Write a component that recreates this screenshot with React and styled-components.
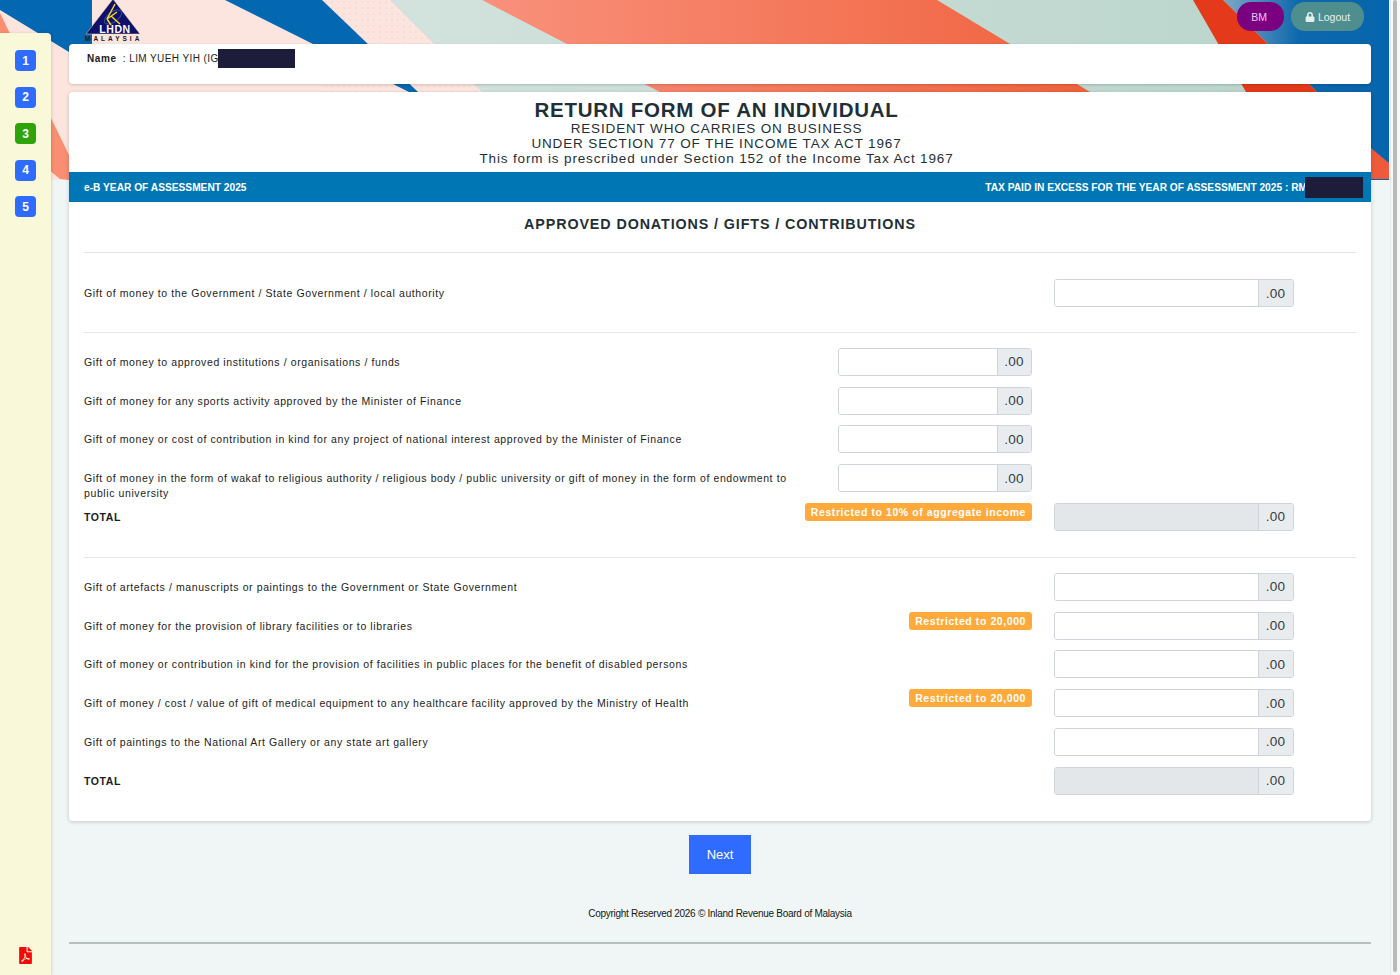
import React from "react";
import styled, { createGlobalStyle } from "styled-components";
import { FaLock, FaFilePdf } from "react-icons/fa";

const GlobalStyle = createGlobalStyle`
    html, body {
        margin: 0;
        padding: 0;
        background: #eff6f5;
        font-family: "Liberation Sans", Arial, sans-serif;
    }
`

const Page = styled.div`
    position: relative;
    display: flex;
    height: 975px;
    overflow: hidden;
    background: #eff6f5;
`

const BannerArt = styled.svg`
    position: absolute;
    top: 0;
    left: 0;
`

const Sidebar = styled.aside`
    position: relative;
    width: 51px;
    margin-top: 33px;
    padding: 17px 0 11px;
    box-sizing: border-box;
    display: flex;
    flex-direction: column;
    align-items: center;
    gap: 15.5px;
    background: #f9f9d9;
    border-top-right-radius: 4px;
    box-shadow: 1px 0 3px rgba(0, 0, 0, 0.12);
`

const StepBadge = styled.div`
    width: 21px;
    height: 21px;
    display: flex;
    align-items: center;
    justify-content: center;
    border-radius: 4px;
    background: ${({ $done }) => ($done ? "#2ea40a" : "#2f6bff")};
    color: #fff;
    font-size: 12px;
    font-weight: 700;
`

const PdfLink = styled.a`
    margin-top: auto;
    color: #f50a0a;
    font-size: 17px;
    line-height: 0;
`

const Main = styled.main`
    position: relative;
    flex: 1;
    min-width: 0;
    padding: 0 19px 0 18px;
`

const TopBar = styled.div`
    height: 44px;
    display: flex;
    justify-content: space-between;
    padding: 0 7px 0 15px;
`

const Actions = styled.div`
    display: flex;
    gap: 7px;
    padding-top: 2px;
`

const PillButton = styled.button`
    height: 29px;
    width: ${({ $w }) => $w}px;
    padding: 0 ${({ $shift }) => $shift}px 0 0;
    border: none;
    border-radius: 14px;
    display: flex;
    align-items: center;
    justify-content: center;
    gap: 3px;
    background: ${({ $bg }) => $bg};
    color: ${({ $fg }) => $fg};
    font-family: inherit;
    font-size: 10.5px;
`

const NameCard = styled.div`
    height: 40px;
    margin-bottom: 8px;
    padding: 8px 18px;
    box-sizing: border-box;
    position: relative;
    background: #fff;
    border-radius: 4px;
    box-shadow: 0 1px 3px rgba(0, 0, 0, 0.18);
    color: #1c1c1c;
    font-size: 10px;
    line-height: 13px;
    letter-spacing: 0.4px;
`

const NameLabel = styled.b`
    margin-right: 3px;
    letter-spacing: 0.6px;
`

const Redaction = styled.span`
    position: absolute;
    top: ${({ $top }) => $top}px;
    left: ${({ $left }) => $left}px;
    width: ${({ $w }) => $w}px;
    height: ${({ $h }) => $h}px;
    background: #1d1c3a;
`

const Card = styled.section`
    background: #fff;
    border-radius: 4px;
    box-shadow: 0 1px 4px rgba(0, 0, 0, 0.18);
`

const FormHeader = styled.header`
    height: 80px;
    padding: 7px 7px 0 0;
    box-sizing: border-box;
    text-align: center;
    color: #1f2f38;
`

const Title = styled.h1`
    margin: 0;
    font-size: 20.5px;
    line-height: 22px;
    font-weight: 700;
    letter-spacing: 0.75px;
`

const SubTitle = styled.div`
    font-size: 13.5px;
    line-height: 15px;
    letter-spacing: 0.85px;
`

const InfoBar = styled.div`
    position: relative;
    height: 30px;
    padding: 0 64px 0 15px;
    display: flex;
    align-items: center;
    justify-content: space-between;
    background: #0077b5;
    color: #fff;
    font-size: 10.2px;
    font-weight: 700;
`

const FormBody = styled.div`
    padding: 0 15px 15px;
`

const SectionTitle = styled.h2`
    margin: 0;
    height: 51px;
    padding-top: 13px;
    box-sizing: border-box;
    text-align: center;
    border-bottom: 1px solid #e3e6e6;
    color: #1f2f38;
    font-size: 14.3px;
    line-height: 18px;
    font-weight: 700;
    letter-spacing: 0.9px;
`

const Group = styled.div`
    padding: ${({ $top }) => $top}px 0 ${({ $bottom }) => $bottom}px;
    border-bottom: ${({ $last }) => ($last ? "none" : "1.5px solid #e6e8e8")};
`

const Row = styled.div`
    height: 38.8px;
    display: grid;
    grid-template-columns: 712px 42px 194px 22px 240px;
    align-items: start;
`

const Label = styled.div`
    grid-column: 1;
    padding-top: 7px;
    color: #1c1c1c;
    font-size: 10.5px;
    line-height: 15px;
    letter-spacing: 0.6px;
    font-weight: ${({ $bold }) => ($bold ? 700 : 400)};
`

const Notice = styled.div`
    grid-column: 2 / 4;
    justify-self: end;
    height: 18px;
    padding: 0 6px;
    display: flex;
    align-items: center;
    background: #ffaa3b;
    border-radius: 3px;
    color: #fff;
    font-size: 10.5px;
    font-weight: 700;
    letter-spacing: 0.58px;
    white-space: nowrap;
`

const AmountGroup = styled.div`
    grid-column: ${({ $col }) => $col};
    height: 28px;
    display: flex;
    box-sizing: border-box;
    border: 1px solid #ced4da;
    border-radius: 3px;
    overflow: hidden;
`

const AmountInput = styled.input`
    flex: 1;
    min-width: 0;
    border: none;
    outline: none;
    padding: 0 8px;
    background: ${({ disabled }) => (disabled ? "#e4e7ea" : "#fff")};
`

const AmountAddon = styled.span`
    width: ${({ $w }) => $w}px;
    box-sizing: border-box;
    display: flex;
    align-items: center;
    justify-content: center;
    padding-right: 1px;
    border-left: 1px solid #ced4da;
    background: #e9ecef;
    color: #333d44;
    font-size: 13.5px;
    letter-spacing: 0.3px;
`

const NextButton = styled.button`
    display: block;
    width: 62px;
    height: 39px;
    margin: 14px auto 0;
    border: none;
    background: #2f6bff;
    color: #fff;
    font-family: inherit;
    font-size: 13px;
`

const Copyright = styled.div`
    margin-top: 34px;
    text-align: center;
    color: #161616;
    font-size: 10px;
    line-height: 12px;
    letter-spacing: -0.27px;
`

const FooterLine = styled.hr`
    margin: 22px 0 0;
    border: none;
    height: 2px;
    background: #b5bfbf;
`

const ScrollTrack = styled.div`
    position: relative;
    width: 10px;
    padding: 0 3px 3px 2px;
    box-sizing: border-box;
    background: #f6f8f8;
    border-left: 1px solid #e4e8e8;
`

const ScrollThumb = styled.div`
    height: 100%;
    background: #b9b9b9;
    border-radius: 3px;
`

const Banner = () => (
    <BannerArt width="1390" height="180" viewBox="0 0 1390 180">
        <defs>
            <pattern id="dots" width="6" height="6" patternUnits="userSpaceOnUse">
                <circle cx="2" cy="2" r="0.7" fill="#f3c8bb" />
            </pattern>
            <linearGradient id="coral" x1="0" y1="0" x2="1" y2="0">
                <stop offset="0" stopColor="#f9917c" />
                <stop offset="1" stopColor="#f0623d" />
            </linearGradient>
            <linearGradient id="mint" x1="0" y1="0" x2="1" y2="0">
                <stop offset="0" stopColor="#d3e2dd" />
                <stop offset="1" stopColor="#b9d5cb" />
            </linearGradient>
            <linearGradient id="sky" x1="0" y1="0" x2="1" y2="0">
                <stop offset="0" stopColor="#7fa8c4" />
                <stop offset="0.45" stopColor="#0f68ad" />
                <stop offset="1" stopColor="#0565ac" />
            </linearGradient>
        </defs>
        <rect width="1390" height="180" fill="#fde5df" />
        <polygon points="0,0 92,0 92,66 0,10" fill="#0467b1" />
        <polygon points="0,13 69,155 69,180 60,179 0,130" fill="#f98e72" />
        <rect x="322" width="170" height="92" fill="url(#dots)" />
        <polygon points="225,0 322,0 418,92 409,92" fill="#0467b1" />
        <polygon points="390,0 1240,0 1340,92 482,92" fill="url(#mint)" />
        <polygon points="482,0 937,0 1090,92 660,92" fill="url(#coral)" />
        <polygon points="1223,0 1390,0 1390,180 1371,180 1371,92 1317,92" fill="url(#sky)" />
        <polygon points="1193,0 1223,0 1317,92 1246,92" fill="#e4391a" />
        <polygon points="1371,148 1389,163 1389,179 1371,179" fill="#ee5a3c" />
        <rect x="1389" width="1" height="180" fill="#f6f8f8" />
    </BannerArt>
)

const LhdnLogo = () => (
    <svg width="60" height="44" viewBox="0 0 60 44">
        <polygon points="29,-1 2,34 56,34" fill="#10106a" stroke="#e9d9a0" strokeWidth="0.5" />
        <ellipse cx="29" cy="17" rx="10" ry="5" transform="rotate(-35 29 17)" fill="none" stroke="#2f4fa8" strokeWidth="1" />
        <path d="M31 4 L23 19 L33 12 M27 16 L36 24 M23 19 L27 25" fill="none" stroke="#f4d921" strokeWidth="1.5" />
        <text x="31" y="33" textAnchor="middle" fontSize="10.5" fontWeight="700" letterSpacing="0.6" fill="#fff" fontFamily="Liberation Sans">LHDN</text>
        <rect x="0" y="35" width="7" height="7" fill="#0b5f9a" />
        <text x="1" y="41" fontSize="6.5" fontWeight="700" letterSpacing="3" fill="#1d1d1d" fontFamily="Liberation Sans">MALAYSIA</text>
    </svg>
)

const Amount = ({ col, disabled }) => (
    <AmountGroup $col={col}>
        <AmountInput disabled={disabled} />
        <AmountAddon $w={col === 3 ? 34 : 35}>.00</AmountAddon>
    </AmountGroup>
)

const institutionRows = [
    "Gift of money to approved institutions / organisations / funds",
    "Gift of money for any sports activity approved by the Minister of Finance",
    "Gift of money or cost of contribution in kind for any project of national interest approved by the Minister of Finance",
    "Gift of money in the form of wakaf to religious authority / religious body / public university or gift of money in the form of endowment to public university",
];

const otherRows = [
    { text: "Gift of artefacts / manuscripts or paintings to the Government or State Government" },
    { text: "Gift of money for the provision of library facilities or to libraries", notice: "Restricted to 20,000" },
    { text: "Gift of money or contribution in kind for the provision of facilities in public places for the benefit of disabled persons" },
    { text: "Gift of money / cost / value of gift of medical equipment to any healthcare facility approved by the Ministry of Health", notice: "Restricted to 20,000" },
    { text: "Gift of paintings to the National Art Gallery or any state art gallery" },
];

const App = () => {
    return (
        <>
            <GlobalStyle />
            <Page>
                <Banner />
                <Sidebar>
                    {[1, 2, 3, 4, 5].map((n) => (
                        <StepBadge key={n} $done={n === 3}>{n}</StepBadge>
                    ))}
                    <PdfLink><FaFilePdf /></PdfLink>
                </Sidebar>
                <Main>
                    <TopBar>
                        <LhdnLogo />
                        <Actions>
                            <PillButton $w={47} $shift={3} $bg="#7a0080" $fg="#ecc6f0">BM</PillButton>
                            <PillButton $w={73} $shift={0} $bg="#4f8e8f" $fg="#e4f0f0"><FaLock size={10} />Logout</PillButton>
                        </Actions>
                    </TopBar>
                    <NameCard>
                        <NameLabel>Name</NameLabel> : LIM YUEH YIH (IG
                        <Redaction $top={5} $left={149} $w={77} $h={19} />
                    </NameCard>
                    <Card>
                        <FormHeader>
                            <Title>RETURN FORM OF AN INDIVIDUAL</Title>
                            <SubTitle>RESIDENT WHO CARRIES ON BUSINESS</SubTitle>
                            <SubTitle>UNDER SECTION 77 OF THE INCOME TAX ACT 1967</SubTitle>
                            <SubTitle>This form is prescribed under Section 152 of the Income Tax Act 1967</SubTitle>
                        </FormHeader>
                        <InfoBar>
                            <span>e-B YEAR OF ASSESSMENT 2025</span>
                            <span>TAX PAID IN EXCESS FOR THE YEAR OF ASSESSMENT 2025 : RM</span>
                            <Redaction $top={5} $left={1236} $w={58} $h={21} />
                        </InfoBar>
                        <FormBody>
                            <SectionTitle>APPROVED DONATIONS / GIFTS / CONTRIBUTIONS</SectionTitle>
                            <Group $top={26} $bottom={14}>
                                <Row>
                                    <Label>Gift of money to the Government / State Government / local authority</Label>
                                    <Amount col={5} />
                                </Row>
                            </Group>
                            <Group $top={15} $bottom={15}>
                                {institutionRows.map((text) => (
                                    <Row key={text}>
                                        <Label>{text}</Label>
                                        <Amount col={3} />
                                    </Row>
                                ))}
                                <Row>
                                    <Label $bold>TOTAL</Label>
                                    <Notice>Restricted to 10% of aggregate income</Notice>
                                    <Amount col={5} disabled />
                                </Row>
                            </Group>
                            <Group $top={15} $bottom={0} $last>
                                {otherRows.map((row) => (
                                    <Row key={row.text}>
                                        <Label>{row.text}</Label>
                                        {row.notice && <Notice>{row.notice}</Notice>}
                                        <Amount col={5} />
                                    </Row>
                                ))}
                                <Row>
                                    <Label $bold>TOTAL</Label>
                                    <Amount col={5} disabled />
                                </Row>
                            </Group>
                        </FormBody>
                    </Card>
                    <NextButton>Next</NextButton>
                    <Copyright>Copyright Reserved 2026 © Inland Revenue Board of Malaysia</Copyright>
                    <FooterLine />
                </Main>
                <ScrollTrack><ScrollThumb /></ScrollTrack>
            </Page>
        </>
    );
}

export default App;
